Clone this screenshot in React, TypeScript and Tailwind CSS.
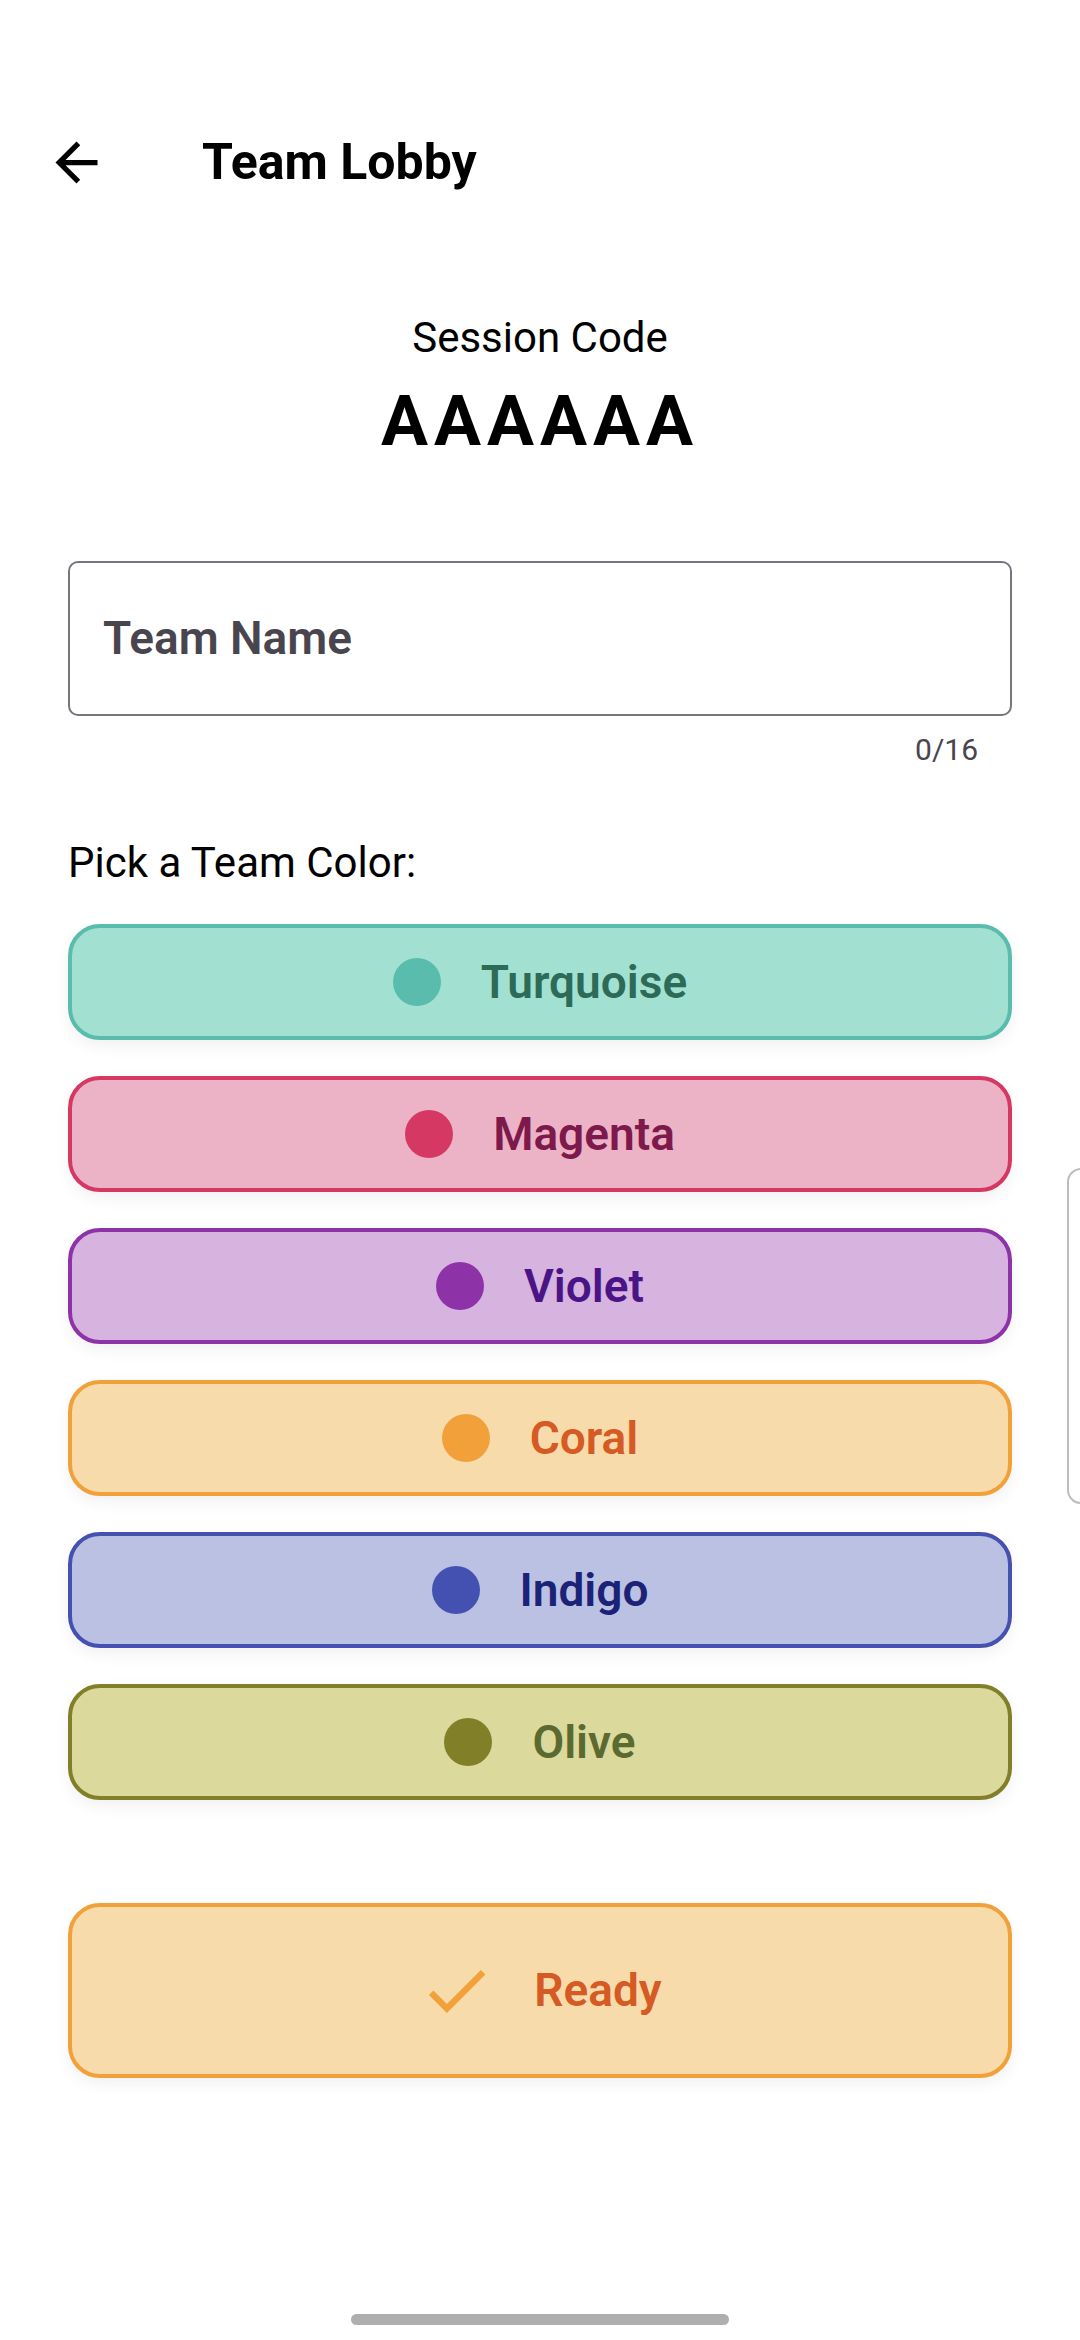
import React from "react";

type Opt = { name: string; border: string; bg: string; text: string };

const options: Opt[] = [
  { name: "Turquoise", border: "border-[#59bcad]", bg: "bg-[#a2e1d2]", text: "text-[#2d6b58]" },
  { name: "Magenta", border: "border-[#d63864]", bg: "bg-[#ecb3c7]", text: "text-[#7e1a4b]" },
  { name: "Violet", border: "border-[#8e32a8]", bg: "bg-[#d7b3e0]", text: "text-[#4a1487]" },
  { name: "Coral", border: "border-[#f2a03a]", bg: "bg-[#f8dbab]", text: "text-[#d55a24]" },
  { name: "Indigo", border: "border-[#4451b0]", bg: "bg-[#bbc1e3]", text: "text-[#1c2277]" },
  { name: "Olive", border: "border-[#817f27]", bg: "bg-[#dbd99b]", text: "text-[#5a6a30]" },
];

const dots: Record<string, string> = {
  Turquoise: "bg-[#59bcad]",
  Magenta: "bg-[#d63864]",
  Violet: "bg-[#8e32a8]",
  Coral: "bg-[#f2a03a]",
  Indigo: "bg-[#4451b0]",
  Olive: "bg-[#817f27]",
};

export default function App() {
  return (
    <div
      className="relative w-[1080px] h-[2340px] bg-white overflow-hidden"
      style={{ fontFamily: "Roboto, 'Noto Sans', sans-serif" }}
    >
      {/* Header */}
      <div className="flex items-center pl-[45px] pt-[131px]">
        <svg width="63" height="63" viewBox="0 0 24 24" fill="#000">
          <path d="M20 11H7.83l5.59-5.59L12 4l-8 8 8 8 1.41-1.41L7.83 13H20v-2z" />
        </svg>
        <div className="ml-[94px] text-[50px] leading-[63px] font-bold text-black">Team Lobby</div>
      </div>

      {/* Session code */}
      <div className="mt-[119px] flex flex-col items-center">
        <div className="text-[42px] leading-[50px] text-black">Session Code</div>
        <div className="mt-[18px] text-[70px] leading-[80px] font-bold tracking-[6px] text-black">AAAAAA</div>
      </div>

      <div className="px-[68px]">
        {/* Text field */}
        <div className="mt-[100px] h-[155px] border-2 border-[#79747e] rounded-[10px] flex items-center pl-[33px]">
          <span className="text-[46px] font-semibold text-[#49454f]">Team Name</span>
        </div>
        <div className="mt-[16px] flex justify-end pr-[34px]">
          <span className="text-[30px] leading-[36px] text-[#49454f]">0/16</span>
        </div>

        <div className="mt-[70px] text-[42px] leading-[50px] text-black">Pick a Team Color:</div>

        <div className="mt-[36px] flex flex-col gap-[36px]">
          {options.map((o) => (
            <div
              key={o.name}
              className={`h-[116px] border-[4px] ${o.border} ${o.bg} rounded-[32px] flex items-center justify-center gap-[40px] shadow-[0_6px_16px_rgba(0,0,0,0.06)]`}
            >
              <div className={`w-[48px] h-[48px] rounded-full ${dots[o.name]}`} />
              <span className={`text-[46px] font-semibold ${o.text}`}>{o.name}</span>
            </div>
          ))}
        </div>

        <div className="mt-[103px] h-[175px] border-[4px] border-[#f2a03a] bg-[#f8dbab] rounded-[32px] flex items-center justify-center gap-[39px] shadow-[0_6px_16px_rgba(0,0,0,0.06)]">
          <svg width="77" height="77" viewBox="0 0 24 24" fill="#f2a03a">
            <path d="M9 16.17L4.83 12l-1.42 1.41L9 19 21 7l-1.41-1.41z" />
          </svg>
          <span className="text-[46px] font-semibold text-[#d55a24]">Ready</span>
        </div>
      </div>

      {/* Edge handle */}
      <div className="absolute left-[1067px] top-[1168px] w-[30px] h-[336px] border-2 border-[#bdbdbd] rounded-l-[14px] bg-white" />

      {/* Home indicator */}
      <div className="absolute left-[351px] top-[2314px] w-[378px] h-[11px] rounded-full bg-[#afafaf]" />
    </div>
  );
}
